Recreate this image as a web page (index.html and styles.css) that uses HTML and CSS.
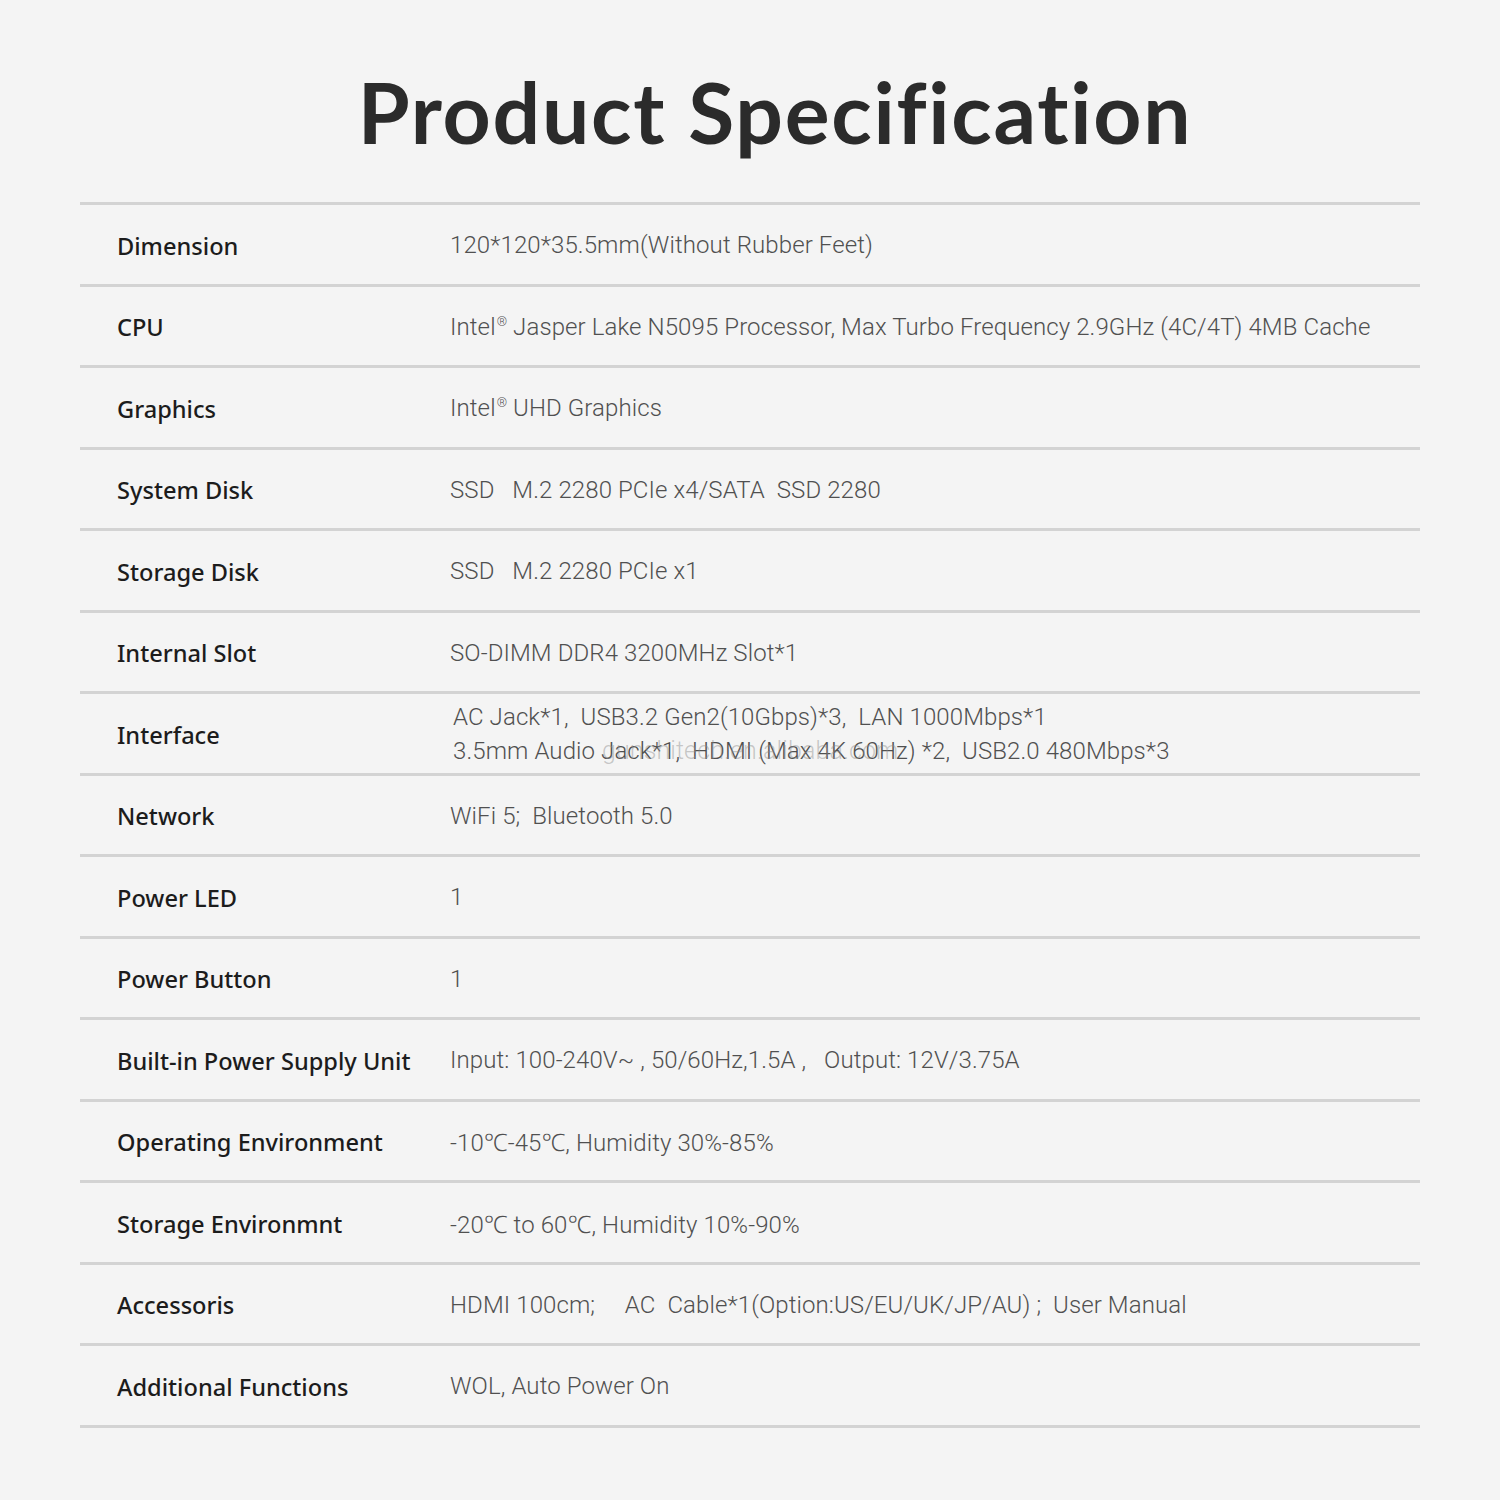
FILE: index.html
```html
<!DOCTYPE html>
<html lang="en">
<head>
<meta charset="utf-8">
<title>Product Specification</title>
<link rel="stylesheet" href="styles.css">
</head>
<body>
<main class="page">
  <h1 class="title">Product Specification</h1>
  <div class="spec">
    <div class="row"><div class="label">Dimension</div><div class="value">120*120*35.5mm(Without Rubber Feet)</div></div>
    <div class="row"><div class="label">CPU</div><div class="value">Intel<sup class="reg">®</sup> Jasper Lake N5095 Processor, Max Turbo Frequency 2.9GHz (4C/4T) 4MB Cache</div></div>
    <div class="row"><div class="label">Graphics</div><div class="value">Intel<sup class="reg">®</sup> UHD Graphics</div></div>
    <div class="row"><div class="label">System Disk</div><div class="value">SSD&nbsp;&nbsp; M.2 2280 PCIe x4/SATA&nbsp; SSD 2280</div></div>
    <div class="row"><div class="label">Storage Disk</div><div class="value">SSD&nbsp;&nbsp; M.2 2280 PCIe x1</div></div>
    <div class="row"><div class="label">Internal Slot</div><div class="value">SO-DIMM DDR4 3200MHz Slot*1</div></div>
    <div class="row"><div class="label">Interface</div><div class="value multi">AC Jack*1,&nbsp; USB3.2 Gen2(10Gbps)*3,&nbsp; LAN 1000Mbps*1<br>3.5mm Audio Jack*1,&nbsp; HDMI (Max 4K 60Hz) *2,&nbsp; USB2.0 480Mbps*3<span class="watermark">gunshitech.en.alibaba.com</span></div></div>
    <div class="row"><div class="label">Network</div><div class="value">WiFi 5;&nbsp; Bluetooth 5.0</div></div>
    <div class="row"><div class="label">Power LED</div><div class="value">1</div></div>
    <div class="row"><div class="label">Power Button</div><div class="value">1</div></div>
    <div class="row"><div class="label">Built-in Power Supply Unit</div><div class="value">Input: 100-240V~ , 50/60Hz,1.5A ,&nbsp;&nbsp; Output: 12V/3.75A</div></div>
    <div class="row"><div class="label">Operating Environment</div><div class="value">-10℃-45℃, Humidity 30%-85%</div></div>
    <div class="row"><div class="label">Storage Environmnt</div><div class="value">-20℃ to 60℃, Humidity 10%-90%</div></div>
    <div class="row"><div class="label">Accessoris</div><div class="value">HDMI 100cm;&nbsp;&nbsp;&nbsp;&nbsp; AC&nbsp; Cable*1(Option:US/EU/UK/JP/AU) ;&nbsp; User Manual</div></div>
    <div class="row"><div class="label">Additional Functions</div><div class="value">WOL, Auto Power On</div></div>
  </div>
</main>
</body>
</html>
```

FILE: styles.css
```css
html, body {
  margin: 0;
  padding: 0;
  background: #f4f4f4;
}
.page {
  width: 1500px;
  height: 1500px;
  box-sizing: border-box;
  padding: 62px 80px 0;
}
.title {
  margin: 0;
  padding-left: 50px;
  height: 140px;
  text-align: center;
  font-family: "Lato", "Noto Sans", sans-serif;
  font-weight: 700;
  font-size: 84px;
  line-height: 100px;
  color: #2b2b2b;
  letter-spacing: 1.7px;
}
.spec {
  border-top: 3px solid #d3d3d3;
}
.row {
  display: flex;
  align-items: center;
  height: 78.5px;
  border-bottom: 3px solid #d3d3d3;
}
.label {
  width: 333px;
  padding-left: 37px;
  padding-top: 3px;
  flex: none;
  font-family: "Noto Sans", "Open Sans", sans-serif;
  font-weight: 500;
  font-size: 23.6px;
  color: #1c1c1c;
}
.value {
  position: relative;
  padding-top: 2px;
  font-family: "Roboto", "Noto Sans", sans-serif;
  font-weight: 300;
  font-size: 24px;
  letter-spacing: 0.1px;
  color: #505050;
}
.reg {
  font-size: 13px;
  vertical-align: 9px;
  line-height: 0;
  margin-left: 1px;
}
.multi {
  line-height: 34px;
  padding-left: 3px;
}
.watermark {
  position: absolute;
  left: 152px;
  top: 36px;
  font-family: "Roboto", sans-serif;
  font-size: 25px;
  color: rgba(140, 140, 140, 0.45);
  white-space: nowrap;
}
```
